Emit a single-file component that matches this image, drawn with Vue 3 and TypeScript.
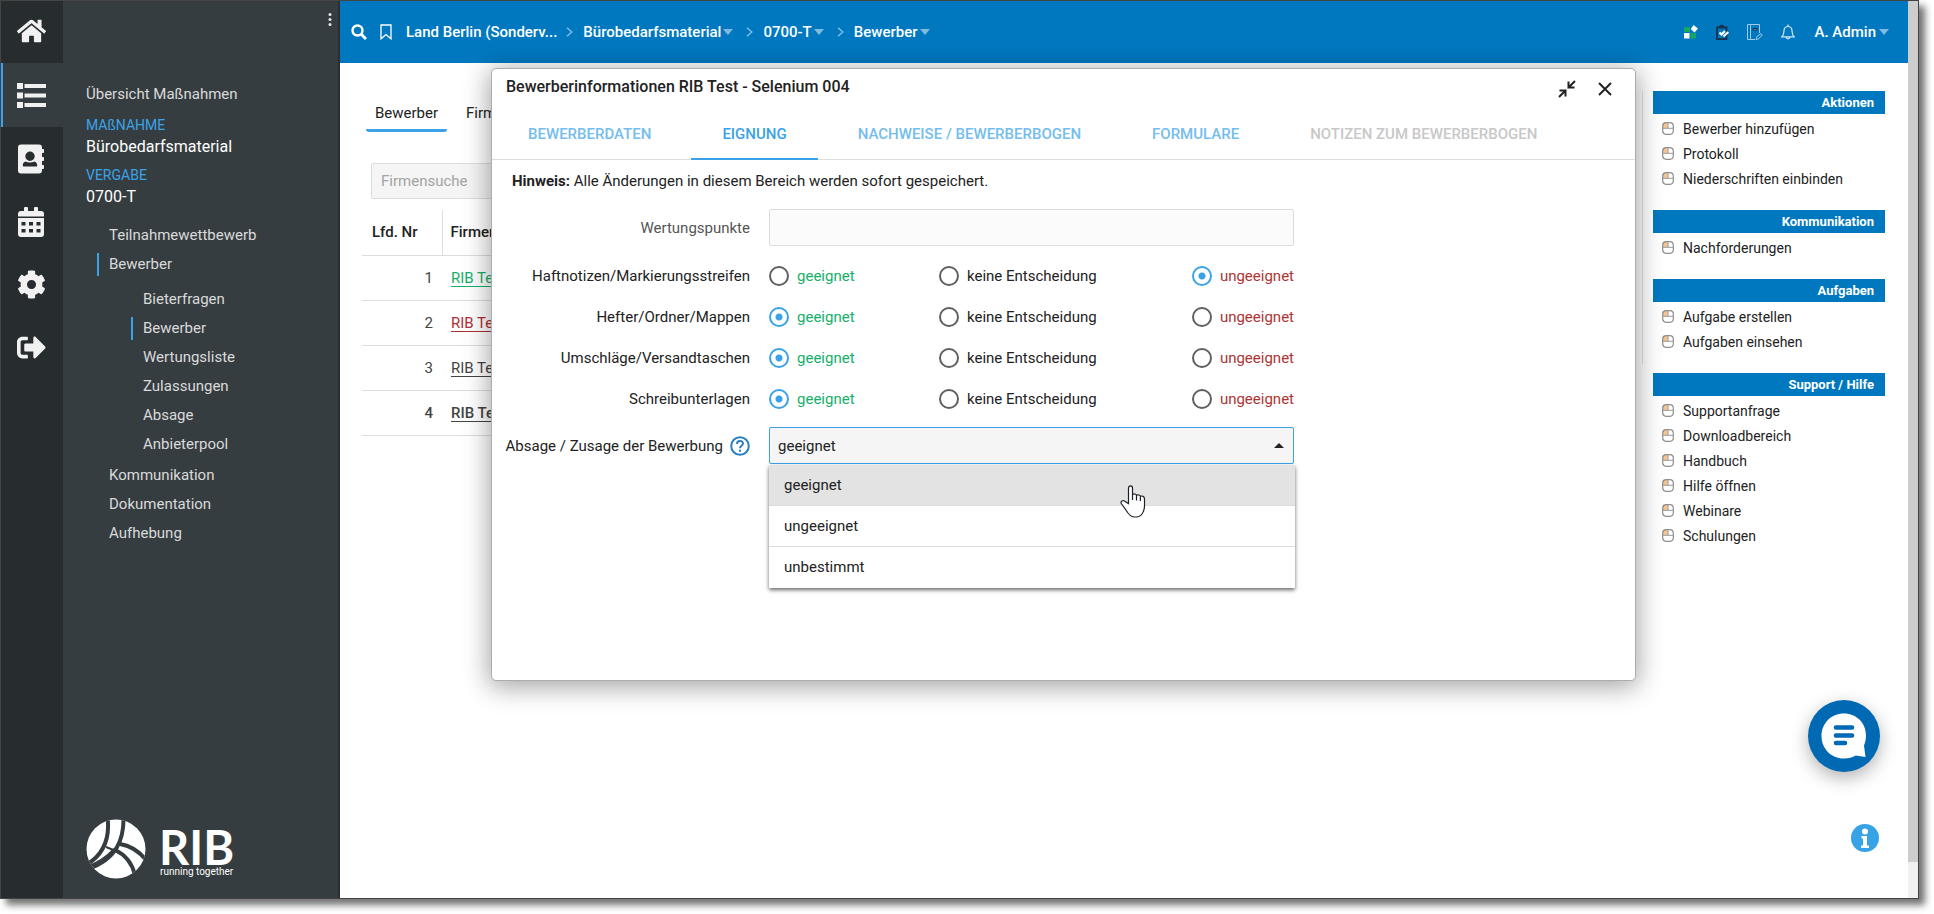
<script setup lang="ts">
import { ref } from 'vue'

interface NavItem { label: string; active?: boolean; children?: NavItem[] }
interface Panel { title: string; items: string[] }
interface LotRow { id: string; label: string; value: string }

const nav: NavItem[] = [
  { label: 'Teilnahmewettbewerb' },
  {
    label: 'Bewerber',
    active: true,
    children: [
      { label: 'Bieterfragen' },
      { label: 'Bewerber', active: true },
      { label: 'Wertungsliste' },
      { label: 'Zulassungen' },
      { label: 'Absage' },
      { label: 'Anbieterpool' },
    ],
  },
  { label: 'Kommunikation' },
  { label: 'Dokumentation' },
  { label: 'Aufhebung' },
]

const crumbs = [
  { label: 'Land Berlin (Sonderv...', menu: false },
  { label: 'Bürobedarfsmaterial', menu: true },
  { label: '0700-T', menu: true },
  { label: 'Bewerber', menu: true },
]

const panels: Panel[] = [
  { title: 'Aktionen', items: ['Bewerber hinzufügen', 'Protokoll', 'Niederschriften einbinden'] },
  { title: 'Kommunikation', items: ['Nachforderungen'] },
  { title: 'Aufgaben', items: ['Aufgabe erstellen', 'Aufgaben einsehen'] },
  { title: 'Support / Hilfe', items: ['Supportanfrage', 'Downloadbereich', 'Handbuch', 'Hilfe öffnen', 'Webinare', 'Schulungen'] },
]

const applicants = [
  { nr: 1, name: 'RIB Test', tone: 'good' },
  { nr: 2, name: 'RIB Test', tone: 'bad' },
  { nr: 3, name: 'RIB Test', tone: '' },
  { nr: 4, name: 'RIB Test', tone: 'current' },
]

const tabs = [
  { label: 'BEWERBERDATEN' },
  { label: 'EIGNUNG', active: true },
  { label: 'NACHWEISE / BEWERBERBOGEN' },
  { label: 'FORMULARE' },
  { label: 'NOTIZEN ZUM BEWERBERBOGEN', disabled: true },
]

const choices = [
  { value: 'geeignet', tone: 'good' },
  { value: 'keine Entscheidung', tone: '' },
  { value: 'ungeeignet', tone: 'bad' },
]

const lots = ref<LotRow[]>([
  { id: 'haft', label: 'Haftnotizen/Markierungsstreifen', value: 'ungeeignet' },
  { id: 'heft', label: 'Hefter/Ordner/Mappen', value: 'geeignet' },
  { id: 'umschlag', label: 'Umschläge/Versandtaschen', value: 'geeignet' },
  { id: 'schreib', label: 'Schreibunterlagen', value: 'geeignet' },
])

const options = ['geeignet', 'ungeeignet', 'unbestimmt']
const decision = ref('geeignet')
const hovered = ref('geeignet')
const search = ref('')
const points = ref('')
</script>

<template>
  <div class="desktop">
    <div class="window">
      <nav class="rail" aria-label="Hauptnavigation">
        <button type="button" class="rail-btn home" aria-label="Startseite">
          <svg width="29" height="26" viewBox="0 0 576 512"><path d="M280.37 148.26L96 300.11V464a16 16 0 0 0 16 16l112.06-.29a16 16 0 0 0 15.92-16V368a16 16 0 0 1 16-16h64a16 16 0 0 1 16 16v95.64a16 16 0 0 0 16 16.05L464 480a16 16 0 0 0 16-16V300L295.67 148.26a12.19 12.19 0 0 0-15.3 0zM571.6 251.47L488 182.56V44.05a12 12 0 0 0-12-12h-56a12 12 0 0 0-12 12v72.61L318.47 43a48 48 0 0 0-61 0L4.34 251.47a12 12 0 0 0-1.6 16.9l25.5 31A12 12 0 0 0 45.15 301l235.22-193.74a12.19 12.19 0 0 1 15.3 0L530.9 301a12 12 0 0 0 16.9-1.6l25.5-31a12 12 0 0 0-1.7-16.93z" /></svg>
        </button>
        <button type="button" class="rail-btn active" aria-label="Maßnahmen">
          <svg width="29" height="25" viewBox="0 0 29 25"><path d="M0 0h6v6H0zM0 9.5h6v6H0zM0 19h6v6H0zM7.500 1h21.500v4H7.500zM7.500 10.500h21.500v4H7.500zM7.500 20h21.500v4H7.500z" /></svg>
        </button>
        <button type="button" class="rail-btn" aria-label="Adressbuch">
          <svg width="28" height="30" viewBox="0 0 28 30"><path fill-rule="evenodd" d="M4 .5h18a3 3 0 0 1 3 3V5h1.200a.8.8 0 0 1 .8.800v2.400a.8.8 0 0 1-.8.800H25v4h1.200a.8.8 0 0 1 .8.800v2.400a.8.8 0 0 1-.8.800H25v4h1.200a.8.8 0 0 1 .8.800v2.400a.8.8 0 0 1-.8.800H25v1.500a3 3 0 0 1-3 3H4a3 3 0 0 1-3-3v-23a3 3 0 0 1 3-3zM13 7.500a4.700 4.700 0 1 0 0 9.400 4.700 4.700 0 0 0 0-9.400zM8.500 17.500C6.500 18.200 5.800 19.600 5.800 21.500c0 .6.4 1 1 1h12.400c.6 0 1-.4 1-1 0-1.900-.7-3.300-2.700-4-2.700 1.400-6.300 1.400-9 0z" /></svg>
        </button>
        <button type="button" class="rail-btn" aria-label="Kalender">
          <svg width="26" height="30" viewBox="0 0 26 30"><path fill-rule="evenodd" d="M6 1a1 1 0 0 1 1-1h2a1 1 0 0 1 1 1v3h6V1a1 1 0 0 1 1-1h2a1 1 0 0 1 1 1v3h3a3 3 0 0 1 3 3v2.500H0V7a3 3 0 0 1 3-3h3zM0 11h26v16a3 3 0 0 1-3 3H3a3 3 0 0 1-3-3zM3.500 15v3.500h4V15zm7.500 0v3.500h4V15zm7.500 0v3.500h4V15zM3.500 22v3.500h4V22zm7.500 0v3.500h4V22zm7.500 0v3.500h4V22z" /></svg>
        </button>
        <button type="button" class="rail-btn" aria-label="Einstellungen">
          <svg width="29" height="29" viewBox="0 0 512 512"><path d="M487.4 315.7l-42.6-24.6c4.3-23.2 4.3-47 0-70.2l42.6-24.6c4.9-2.8 7.1-8.6 5.500-14-11.100-35.600-30-67.800-54.700-94.600-3.800-4.100-10-5.100-14.800-2.300L380.800 110c-17.900-15.400-38.500-27.300-60.800-35.100V25.800c0-5.600-3.900-10.500-9.400-11.700-36.700-8.200-74.300-7.800-109.200 0-5.500 1.200-9.400 6.100-9.400 11.700V75c-22.200 7.900-42.800 19.800-60.800 35.100L88.700 85.500c-4.900-2.800-11-1.900-14.800 2.300-24.700 26.700-43.600 58.900-54.700 94.600-1.700 5.400.6 11.200 5.500 14L67.300 221c-4.300 23.200-4.300 47 0 70.200l-42.600 24.600c-4.900 2.800-7.100 8.600-5.500 14 11.100 35.600 30 67.800 54.700 94.600 3.800 4.100 10 5.100 14.800 2.300l42.600-24.600c17.900 15.400 38.500 27.300 60.800 35.100v49.200c0 5.600 3.900 10.500 9.400 11.700 36.700 8.200 74.300 7.800 109.200 0 5.500-1.200 9.400-6.100 9.400-11.700v-49.200c22.200-7.900 42.800-19.800 60.800-35.100l42.600 24.600c4.900 2.800 11 1.900 14.800-2.300 24.700-26.700 43.600-58.900 54.700-94.600 1.500-5.500-.7-11.300-5.600-14.100zM256 336c-44.100 0-80-35.900-80-80s35.900-80 80-80 80 35.900 80 80-35.900 80-80 80z" /></svg>
        </button>
        <button type="button" class="rail-btn" aria-label="Abmelden">
          <svg width="29" height="29" viewBox="0 0 512 512"><path d="M497 273L329 441c-15 15-41 4.500-41-17v-96H152c-13.300 0-24-10.700-24-24v-96c0-13.300 10.700-24 24-24h136V88c0-21.400 25.900-32 41-17l168 168c9.300 9.400 9.300 24.600 0 34zM192 436v-40c0-6.600-5.400-12-12-12H96c-17.700 0-32-14.300-32-32V160c0-17.700 14.300-32 32-32h84c6.600 0 12-5.400 12-12V76c0-6.600-5.400-12-12-12H96c-53 0-96 43-96 96v192c0 53 43 96 96 96h84c6.600 0 12-5.400 12-12z" /></svg>
        </button>
      </nav>

      <aside class="side">
        <button type="button" class="dots" aria-label="Menü">
          <svg width="4" height="13" viewBox="0 0 4 13"><circle cx="2" cy="1.500" r="1.500" /><circle cx="2" cy="6.500" r="1.500" /><circle cx="2" cy="11.500" r="1.500" /></svg>
        </button>
        <a href="#" class="overview">Übersicht Maßnahmen</a>
        <div class="context">
          <span class="kicker">MAßNAHME</span>
          <a href="#" class="value">Bürobedarfsmaterial</a>
          <span class="kicker">VERGABE</span>
          <a href="#" class="value">0700-T</a>
        </div>
        <ul class="tree">
          <li v-for="item in nav" :key="item.label">
            <a href="#" :class="{ active: item.active }">{{ item.label }}</a>
            <ul v-if="item.children" class="subtree">
              <li v-for="child in item.children" :key="child.label">
                <a href="#" :class="{ active: child.active }">{{ child.label }}</a>
              </li>
            </ul>
          </li>
        </ul>
        <div class="brand">
          <svg width="60" height="60" viewBox="0 0 60 60">
            <defs><clipPath id="disc"><circle cx="30" cy="30" r="29.500" /></clipPath></defs>
            <circle cx="30" cy="30" r="29.500" fill="#fff" />
            <g clip-path="url(#disc)" fill="none" stroke="#363d40">
              <path d="M21.500 -2C24 18 19 35 0 46" stroke-width="4" />
              <path d="M37.500 -2C38 20 31 40 2 50" stroke-width="4" />
              <path d="M28 30C20 39 12 44 0 48" stroke-width="2" />
              <path d="M20 28L30 32" stroke-width="2" />
              <path d="M34 25C46 27 54 33 61 42" stroke-width="4" />
              <path d="M29 31C40 36 46 44 49 56" stroke-width="4" />
            </g>
          </svg>
          <div class="brand-text">
            <span class="brand-name">RIB</span>
            <span class="brand-claim">running together</span>
          </div>
        </div>
      </aside>

      <div class="main">
        <header class="topbar">
          <button type="button" class="icon-btn" aria-label="Suche">
            <svg width="16" height="16" viewBox="0 0 16 16" fill="none" stroke="#fff" stroke-width="2.400"><circle cx="6.500" cy="6.500" r="5" /><path d="M10.300 10.300L15 15" stroke-width="3" /></svg>
          </button>
          <button type="button" class="icon-btn bookmark" aria-label="Lesezeichen">
            <svg width="12" height="16" viewBox="0 0 12 16" fill="none" stroke="#fff" stroke-width="1.300"><path d="M1 1h10v13.800L6 10.500 1 14.800z" /></svg>
          </button>
          <nav class="crumbs" aria-label="Pfad">
            <template v-for="(c, i) in crumbs" :key="c.label">
              <svg v-if="i" class="chev" width="7" height="10" viewBox="0 0 7 10" fill="none" stroke="#7fbbdf" stroke-width="1.500"><path d="M1 .7L5.800 5 1 9.300" /></svg>
              <a href="#" :class="{ menu: c.menu }">{{ c.label }}<svg v-if="c.menu" width="10" height="6" viewBox="0 0 10 6" fill="#7fbbdf"><path d="M0 0h10L5 6z" /></svg></a>
            </template>
          </nav>
          <div class="tools">
            <button type="button" class="icon-btn" aria-label="Module">
              <svg width="14" height="14" viewBox="0 0 14 14"><path fill="#15a862" d="M0 2h6v5H0zM6.500 8H12v5.500H6.500z" /><path fill="#fff" d="M0 8h5.500v5.500H0zM9.500 0L14 3.500 10.500 7.500 6.800 4z" /></svg>
            </button>
            <button type="button" class="icon-btn" aria-label="Aufgaben">
              <svg width="13" height="16" viewBox="0 0 13 16" fill="none"><path d="M1 3.500h9.500v11.500H1z" stroke="#17324d" stroke-width="1.800" /><path d="M2.500 4c0-4.500 6.500-4.500 6.500 0z" fill="#17324d" /><path d="M3.500 8.500l2 2L9 7" stroke="#fff" stroke-width="2.200" /><path d="M12.300 8l-4.800 4.500" stroke="#fff" stroke-width="2" /></svg>
            </button>
            <button type="button" class="icon-btn" aria-label="Notizbuch">
              <svg width="16" height="17" viewBox="0 0 16 17" fill="none" stroke="#9fcbe8"><path d="M8 15.500H.5V.5h12V9M3.500 .5v15" /><path d="M6 4.500h4v1.500H6z" fill="#9fcbe8" stroke="#17324d" /><path d="M9 15.500l1-3 4-3 1.200 1.500-3.700 4z" /></svg>
            </button>
            <button type="button" class="icon-btn" aria-label="Benachrichtigungen">
              <svg width="14" height="16" viewBox="0 0 14 16" fill="none" stroke="#d5e9f5" stroke-width="1.200"><path d="M.8 12.800C3 11.200 2.800 9 3 6.500c.2-2.600 1.800-4 4-4s3.800 1.400 4 4c.2 2.500 0 4.700 2.200 6.300zM7 2.500V.5M5.200 13c.3 2.400 3.300 2.400 3.600 0" /></svg>
            </button>
            <button type="button" class="user">A. Admin<svg width="10" height="6" viewBox="0 0 10 6" fill="#7fbbdf"><path d="M0 0h10L5 6z" /></svg></button>
          </div>
        </header>

        <div class="body">
          <main class="list">
            <div class="list-tabs">
              <a href="#" class="active">Bewerber</a>
              <a href="#">Firmen</a>
            </div>
            <input v-model="search" class="search" type="text" placeholder="Firmensuche" aria-label="Firmensuche" />
            <table class="grid">
              <thead>
                <tr><th class="nr">Lfd. Nr</th><th>Firmenname</th></tr>
              </thead>
              <tbody>
                <tr v-for="a in applicants" :key="a.nr" :class="a.tone">
                  <td class="nr">{{ a.nr }}</td>
                  <td><a href="#">{{ a.name }}</a></td>
                </tr>
              </tbody>
            </table>
          </main>

          <aside class="actions">
            <section v-for="p in panels" :key="p.title">
              <h2>{{ p.title }}</h2>
              <ul>
                <li v-for="item in p.items" :key="item">
                  <svg width="12" height="13" viewBox="0 0 12 13" fill="none"><path d="M1 1h5v5H1z" fill="#fbc58c" /><rect x=".7" y=".7" width="10.600" height="11.600" rx="3.500" stroke="#8e8e8e" stroke-width="1.200" /><path d="M.7 6.300h10.600M6 .7v5.600" stroke="#9a9a9a" /></svg>
                  <a href="#">{{ item }}</a>
                </li>
              </ul>
            </section>
          </aside>
        </div>

        <section class="dialog" role="dialog" aria-labelledby="dlg-title">
          <div class="dialog-head">
            <h1 id="dlg-title">Bewerberinformationen RIB Test - Selenium 004</h1>
            <button type="button" class="icon-btn" aria-label="Verkleinern">
              <svg width="18" height="18" viewBox="0 0 18 18" fill="none" stroke="#222" stroke-width="2"><path d="M17 1l-6 6M10.500 1.500v6h6M1 17l6-6M1.500 10.500h6v6" /></svg>
            </button>
            <button type="button" class="icon-btn close" aria-label="Schließen">
              <svg width="14" height="14" viewBox="0 0 14 14" fill="none" stroke="#222" stroke-width="2"><path d="M1 1l12 12M13 1L1 13" /></svg>
            </button>
          </div>
          <div class="tabs" role="tablist">
            <button v-for="t in tabs" :key="t.label" type="button" role="tab" :aria-selected="!!t.active" :disabled="t.disabled" :class="{ active: t.active }">{{ t.label }}</button>
          </div>
          <p class="hint"><strong>Hinweis:</strong> Alle Änderungen in diesem Bereich werden sofort gespeichert.</p>
          <form class="form" @submit.prevent>
            <div class="row first">
              <label class="label muted" for="points">Wertungspunkte</label>
              <input id="points" v-model="points" class="field" type="text" readonly />
            </div>
            <div v-for="lot in lots" :key="lot.id" class="row lot" role="radiogroup" :aria-labelledby="lot.id">
              <span :id="lot.id" class="label">{{ lot.label }}</span>
              <div class="choices">
                <label v-for="c in choices" :key="c.value" :class="c.tone">
                  <input v-model="lot.value" type="radio" :name="lot.id" :value="c.value" />{{ c.value }}
                </label>
              </div>
            </div>
            <div class="row last">
              <div class="label">
                <label for="decision">Absage / Zusage der Bewerbung</label>
                <svg width="20" height="20" viewBox="0 0 20 20" fill="none" stroke="#2b7fc3" stroke-width="2"><circle cx="10" cy="10" r="8.800" /><path d="M7 8c0-4 6-4 6-.4 0 2.200-3 2.300-3 4.700M10 13.700v2" /></svg>
              </div>
              <div class="select-wrap">
                <select id="decision" v-model="decision" class="field">
                  <option v-for="o in options" :key="o" :value="o">{{ o }}</option>
                </select>
                <svg class="caret" width="10" height="5" viewBox="0 0 10 5" fill="#222"><path d="M0 5h10L5 0z" /></svg>
                <ul class="options" role="listbox">
                  <li v-for="o in options" :key="o" role="option" :aria-selected="o === decision" :class="{ hovered: o === hovered }" @mouseenter="hovered = o" @click="decision = o">{{ o }}</li>
                </ul>
                <svg class="pointer" width="26" height="33" viewBox="0 0 26 33" fill="#fff" stroke="#1c1f2b" stroke-width="1.200" stroke-linejoin="round"><path d="M8.500 17V3.200c0-3 4-3 4 0V9.500c1.200-1 3.500-.6 4 .8 1.300-.8 3.400-.3 3.900 1 1.800-.8 4.100.1 4.100 2.700v7c0 4-1 5.500-2.200 7.500C21 30.500 19 32 16 32h-1.500c-3 0-5-2-6.500-4L1.300 18.500C.3 16.500 2.500 15 4.500 16c1.500.8 2.800 2 4 2.800zM12.500 9v6M16.500 10v5.500M20.400 11.300V16" /></svg>
              </div>
            </div>
          </form>
        </section>

        <button type="button" class="chat" aria-label="Chat">
          <svg width="46" height="46" viewBox="0 0 46 46"><path fill="#fff" d="M23 .5C35.500.5 45 10 45 22.500c0 4-.8 7.200-2 10L44.500 44l-9.800-1.500C31.500 44.500 27.500 45.500 23 45.500 10 45.500.5 35.500.5 23S10 .5 23 .5z" /><path d="M15 14.500h16M15 22.500h16M15 30h9" stroke="#0069b4" stroke-width="4.600" stroke-linecap="round" /></svg>
        </button>
        <button type="button" class="info" aria-label="Information">
          <svg width="28" height="28" viewBox="0 0 28 28"><circle cx="14" cy="14" r="14" fill="#37a3e6" /><path fill="#fff" d="M14 4.500a3 3 0 1 1 0 6 3 3 0 0 1 0-6zM10.500 12H16v9.500h2v2.500h-8v-2.500h2v-7h-1.500z" /></svg>
        </button>
      </div>
      <div class="scrollbar"><div class="thumb"></div></div>
    </div>
  </div>
</template>

<style>
body {
  margin: 0;
  background: #fff;
}
</style>

<style scoped>
.desktop {
  box-sizing: border-box;
  height: 100vh;
  padding: 0 15px 15px 0;
  overflow: hidden;
  font: 15px/20px Roboto, "Liberation Sans", sans-serif;
  color: #222;
}
.desktop *,
.desktop *::before {
  box-sizing: border-box;
}
a {
  color: inherit;
  text-decoration: none;
}
ul {
  list-style: none;
  margin: 0;
  padding: 0;
}
button {
  border: 0;
  background: none;
  padding: 0;
  font: inherit;
  color: inherit;
  cursor: pointer;
}
svg {
  display: block;
  flex: none;
}
.window {
  display: flex;
  height: 100%;
  border: 1px solid #444;
  background: #fff;
  box-shadow: 6px 6px 7px rgba(0, 0, 0, 0.55);
}

/* icon rail */
.rail {
  width: 62px;
  flex: none;
  background: #272c2e;
  display: flex;
  flex-direction: column;
}
.rail-btn {
  height: 63px;
  display: flex;
  align-items: center;
  justify-content: center;
  padding-right: 2px;
  fill: #f1f1f1;
}
.rail-btn.home {
  height: 62px;
  padding-bottom: 2px;
}
.rail-btn.active {
  height: 64px;
  background: #363d40;
  box-shadow: inset 2px 0 0 #3aa3e8;
}

/* side navigation */
.side {
  width: 277px;
  flex: none;
  position: relative;
  display: flex;
  flex-direction: column;
  background: #363d40;
  border-right: 2px solid #2b2f31;
  padding: 83px 0 19px 23px;
  color: #d9dadb;
}
.dots {
  position: absolute;
  top: 12px;
  right: 6px;
  fill: #e6e6e6;
}
.overview {
  align-self: flex-start;
}
.context {
  display: flex;
  flex-direction: column;
  align-items: flex-start;
  margin-top: 10px;
}
.kicker {
  font-size: 14px;
  line-height: 22px;
  color: #3aa3e8;
}
.value {
  font-size: 16px;
  line-height: 22px;
  color: #fff;
  margin-bottom: 6px;
}
.tree {
  margin: 10px 0 0 11px;
}
.tree a {
  display: inline-block;
  line-height: 23px;
  padding-left: 10px;
  border-left: 2px solid transparent;
  margin-bottom: 6px;
}
.tree li {
  display: flex;
  flex-direction: column;
  align-items: flex-start;
}
.tree a.active {
  border-left-color: #3aa3e8;
}
.subtree {
  margin: 6px 0 2px 34px;
}
.brand {
  margin-top: auto;
  display: flex;
  align-items: flex-end;
  gap: 13px;
  color: #fff;
}
.brand-text {
  display: flex;
  flex-direction: column;
}
.brand-name {
  font: 700 47px/36px Lato, sans-serif;
}
.brand-claim {
  padding-left: 1px;
  font: 10px/14px Roboto, sans-serif;
}

/* main column */
.main {
  flex: 1;
  min-width: 0;
  position: relative;
  display: flex;
  flex-direction: column;
}
.topbar {
  height: 62px;
  flex: none;
  background: #0078c0;
  color: #fff;
  font-weight: 500;
  display: flex;
  align-items: center;
  padding: 0 19px 0 11px;
}
.bookmark {
  margin: 0 14px 0 13px;
}
.crumbs {
  display: flex;
  align-items: center;
}
.chev {
  margin: 0 10px 0 9px;
}
.crumbs a {
  display: flex;
  align-items: center;
  gap: 2px;
}
.crumbs .menu {
  padding-right: 4px;
}
.tools {
  margin-left: auto;
  display: flex;
  align-items: center;
  gap: 18px;
}
.user {
  display: flex;
  align-items: center;
  gap: 3px;
  margin-left: 2px;
}
.body {
  flex: 1;
  display: flex;
  justify-content: space-between;
}
.list {
  width: 600px;
  padding: 36px 0 0 22px;
}
.list-tabs {
  display: flex;
  gap: 10px;
  margin-left: 4px;
}
.list-tabs a {
  padding: 4px 9px 6px;
  border-bottom: 3px solid transparent;
  border-radius: 3px;
}
.list-tabs .active {
  border-bottom-color: #3aa3e8;
}
.search {
  display: block;
  width: 300px;
  height: 36px;
  margin: 31px 0 11px 9px;
  padding: 0 9px;
  border: 1px solid #ddd;
  border-radius: 2px;
  background: #f5f5f5;
  font: inherit;
}
.search::placeholder {
  color: #a3a3a3;
}
.grid {
  width: 100%;
  border-collapse: collapse;
  text-align: left;
}
.grid th {
  height: 45px;
  padding: 0 8px;
  font-weight: 500;
  border-bottom: 1px solid #ddd;
}
.grid th.nr {
  width: 80px;
  padding-left: 10px;
  border-right: 1px solid #ddd;
  text-align: left;
}
.grid td {
  height: 45px;
  padding: 0 9px;
  border-bottom: 1px solid #ddd;
  color: #444;
}
.grid td.nr {
  text-align: right;
}
.grid td a {
  text-decoration: underline;
  text-underline-offset: 3px;
}
.grid .good a {
  color: #15b06a;
}
.grid .bad a {
  color: #b12d33;
}
.grid .current td {
  font-weight: 500;
}

/* action panels */
.actions {
  position: relative;
  width: 232px;
  margin: 28px 23px 0 0;
}
.actions::before {
  content: "";
  position: absolute;
  top: 0;
  left: -11px;
  width: 1px;
  height: 273px;
  background: #e4e4e4;
}
.actions section {
  margin-bottom: 19px;
}
.actions h2 {
  margin: 0 0 2px;
  padding: 0 11px;
  background: #0078c0;
  color: #fff;
  font: 700 13px/23px Roboto, sans-serif;
  text-align: right;
}
.actions li {
  display: flex;
  align-items: center;
  gap: 9px;
  height: 25px;
  padding-left: 9px;
  font-size: 14px;
}

/* dialog */
.dialog {
  position: absolute;
  top: 67px;
  left: 151px;
  right: 272px;
  min-height: 613px;
  background: #fff;
  border: 1px solid #adadad;
  border-radius: 5px;
  box-shadow: 0 4px 26px 2px rgba(0, 0, 0, 0.36);
}
.dialog-head {
  display: flex;
  align-items: center;
  height: 40px;
  padding: 0 23px 0 14px;
}
.dialog-head h1 {
  margin: 0 auto 0 0;
  padding-bottom: 4px;
  font: 500 16px/20px Roboto, sans-serif;
}
.close {
  margin-left: 22px;
}
.tabs {
  display: flex;
  gap: 9px;
  height: 51px;
  padding-left: 5px;
  border-bottom: 1px solid #ddd;
}
.tabs button {
  height: 51px;
  padding: 0 31px;
  border-bottom: 2px solid transparent;
  font-weight: 500;
  color: #74bdee;
}
.tabs .active {
  color: #3aa3e8;
  border-bottom-color: #3aa3e8;
}
.tabs button:disabled {
  color: #c8c8c8;
}
.hint {
  margin: 11px 20px 18px;
}
.hint strong {
  font-weight: 700;
}
.row {
  display: grid;
  grid-template-columns: 246px minmax(0, 525px);
  column-gap: 19px;
  align-items: center;
  padding-left: 12px;
}
.first {
  margin-bottom: 9px;
}
.lot {
  height: 41px;
}
.last {
  margin-top: 8px;
}
.label {
  display: flex;
  justify-content: flex-end;
  align-items: center;
  gap: 7px;
  white-space: nowrap;
}
.muted {
  color: #555;
}
.field {
  display: block;
  width: 100%;
  height: 37px;
  padding: 0 8px;
  border: 1px solid #ddd;
  border-radius: 2px;
  background: #fbfbfb;
  font: inherit;
  color: #222;
}
.choices {
  display: grid;
  grid-template-columns: 170px 1fr auto;
}
.choices label {
  display: flex;
  align-items: center;
  gap: 8px;
}
.choices .good {
  color: #15b06a;
}
.choices .bad {
  color: #ae3434;
}
.choices input {
  appearance: none;
  width: 20px;
  height: 20px;
  margin: 0;
  border: 2px solid #606060;
  border-radius: 50%;
}
.choices input:checked {
  border-color: #3aa3e8;
  background: radial-gradient(circle, #3aa3e8 0 3px, transparent 4px);
}
.select-wrap {
  position: relative;
}
.select-wrap .field {
  appearance: none;
  background: #f5f5f5;
  border-color: #3aa3e8;
}
.caret {
  position: absolute;
  right: 10px;
  top: 16px;
}
.options {
  position: absolute;
  top: 38px;
  left: 0;
  right: -1px;
  background: #fff;
  box-shadow: 0 2px 4px 0 rgba(0, 0, 0, 0.6);
}
.options li {
  height: 41px;
  padding: 0 15px;
  line-height: 40px;
  border-bottom: 1px solid #ddd;
}
.options li:last-child {
  border-bottom-color: transparent;
}
.options .hovered {
  background: #e3e3e3;
}
.pointer {
  position: absolute;
  right: 148px;
  top: 58px;
}

/* floating helpers */
.chat {
  position: absolute;
  right: 28px;
  bottom: 126px;
  width: 72px;
  height: 72px;
  border-radius: 50%;
  background: #0069b4;
  display: grid;
  place-items: center;
  box-shadow: 0 6px 18px rgba(0, 0, 0, 0.3);
}
.info {
  position: absolute;
  right: 29px;
  bottom: 46px;
}
.scrollbar {
  width: 10px;
  flex: none;
  background: #f0f0f0;
}
.thumb {
  height: 96%;
  background: #cdcdcd;
}
</style>
